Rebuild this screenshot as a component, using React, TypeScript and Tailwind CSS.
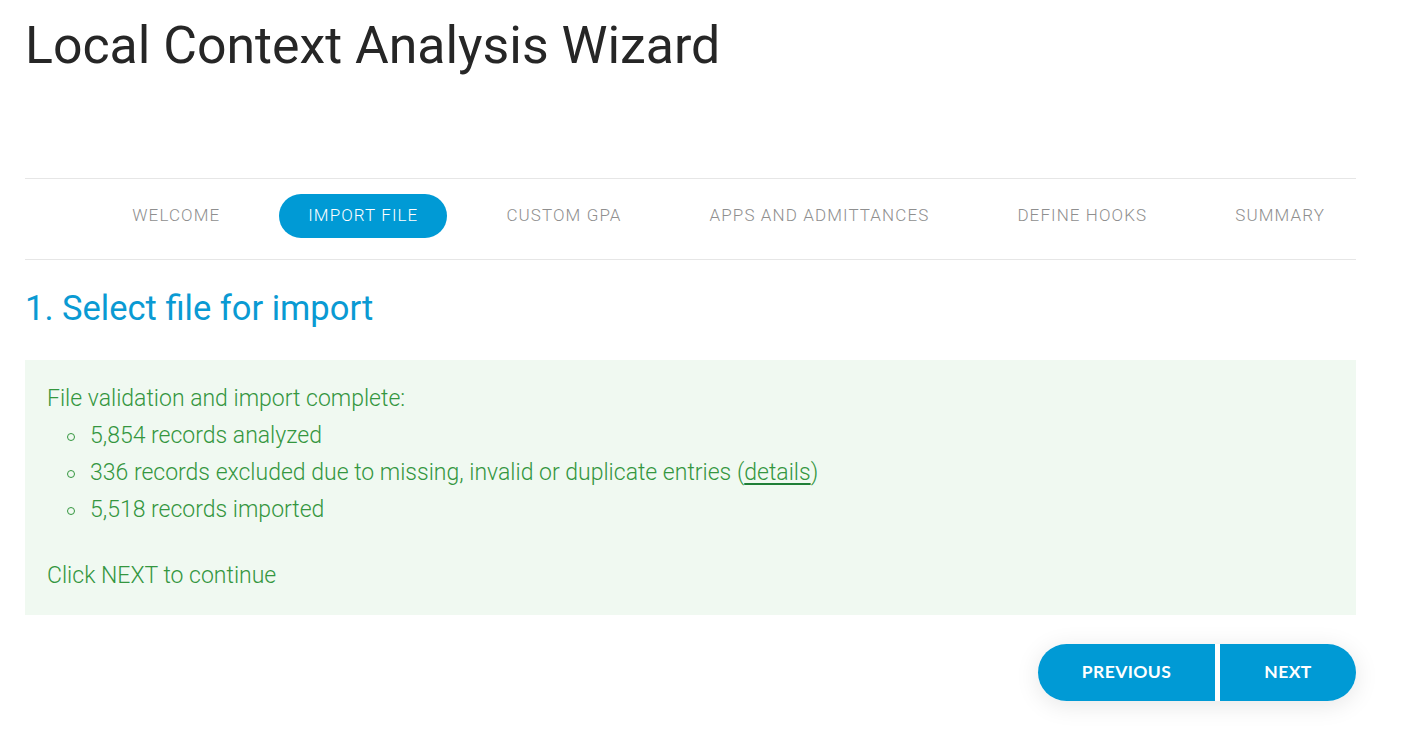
import React from "react";

const tabs = ["WELCOME", "IMPORT FILE", "CUSTOM GPA", "APPS AND ADMITTANCES", "DEFINE HOOKS", "SUMMARY"];

function Item({ children }: { children: React.ReactNode }) {
  return (
    <li className="flex items-center pl-[20px]">
      <span className="mr-[15px] mt-[2px] h-[8px] w-[8px] rounded-full border-[1.5px] border-[#34963f]" />
      <span>{children}</span>
    </li>
  );
}

export default function App() {
  return (
    <div className="min-h-[730px] bg-white px-[25px] pr-[52px] text-[#222]" style={{ fontFamily: "Roboto, 'Noto Sans', sans-serif" }}>
      <h1 className="pt-[14px] text-[51.8px] leading-[64px] font-normal text-[#262626]">Local Context Analysis Wizard</h1>
      <div className="mt-[100px] border-t border-b border-[#e6e6e6] h-[82px] flex items-center justify-end gap-[30px] pr-[2px] pb-[7px]">
        {tabs.map((t, i) => (
          <div
            key={t}
            className={
              "h-[44px] px-[29px] flex items-center rounded-full text-[17px] font-light tracking-[1.1px] " +
              (i === 1 ? "bg-[#009ad5] text-white" : "text-[#8f8f8f]")
            }
          >
            {t}
          </div>
        ))}
      </div>
      <h2 className="mt-[26px] text-[34.5px] leading-[44px] text-[#0a9ad3] font-normal">1. Select file for import</h2>
      <div className="mt-[30px] bg-[#f0f9f1] px-[22px] pt-[20px] pb-[21px] text-[23px] leading-[37px] font-light text-[#34963f]">
        <div>File validation and import complete:</div>
        <ul>
          <Item>5,854 records analyzed</Item>
          <Item>
            336 records excluded due to missing, invalid or duplicate entries (
            <span className="underline decoration-[#1f7f37] decoration-2 underline-offset-[3px]">details</span>)
          </Item>
          <Item>5,518 records imported</Item>
        </ul>
        <div className="mt-[29px]">Click NEXT to continue</div>
      </div>
      <div className="mt-[29px] flex justify-end">
        <div className="flex gap-[5px] rounded-full shadow-[0_4px_24px_rgba(0,0,0,0.10)]">
          <button className="h-[57px] w-[177px] rounded-l-full bg-[#009ad5] text-white font-bold text-[17.5px] tracking-[0.4px]" style={{ fontFamily: "Lato, 'Open Sans', sans-serif" }}>
            PREVIOUS
          </button>
          <button className="h-[57px] w-[136px] rounded-r-full bg-[#009ad5] text-white font-bold text-[17.5px] tracking-[0.4px]" style={{ fontFamily: "Lato, 'Open Sans', sans-serif" }}>
            NEXT
          </button>
        </div>
      </div>
    </div>
  );
}
